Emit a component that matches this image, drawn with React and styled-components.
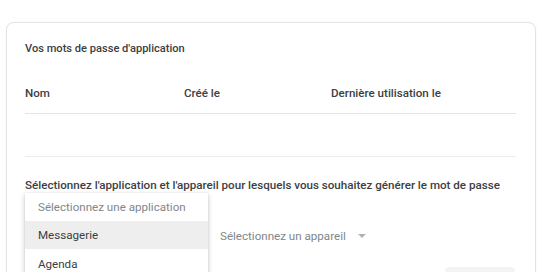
import React from "react";
import styled, { createGlobalStyle } from "styled-components";

const GlobalStyle = createGlobalStyle`
  html, body {
    margin: 0;
    padding: 0;
    background: #ffffff;
    font-family: Roboto, "Liberation Sans", Arial, sans-serif;
    overflow: hidden;
  }
`;

const Page = styled.div`
  width: 540px;
  height: 272px;
  overflow: hidden;
`;

const Intro = styled.p`
  margin: -13px 0 0 115px;
  font-size: 11px;
  line-height: 16px;
  color: #dcdee0;
  white-space: nowrap;

  a {
    color: #a8c7fa;
    text-decoration: none;
  }
`;

const Card = styled.section`
  margin: 19px 4px 0 6px;
  border: 1px solid #e3e3e3;
  border-radius: 8px;
  padding: 18px 19px 20px 18px;
  box-shadow: 0 0 2px rgba(0, 0, 0, 0.06);
`;

const Title = styled.h2`
  margin: 0;
  font-size: 11.1px;
  line-height: 16px;
  font-weight: 500;
  color: #3c4043;
`;

const Row = styled.div`
  display: grid;
  grid-template-columns: 159px 147px 1fr;
  align-items: center;
  height: ${(p) => p.$height}px;
  border-bottom: 1px solid ${(p) => p.$line};
`;

const HeadCell = styled.div`
  font-size: 11.6px;
  font-weight: 500;
  color: #3c4043;
`;

const Table = styled.div`
  margin-top: 16px;
`;

const Heading = styled.h3`
  margin: 20px 0 0;
  font-size: 11.6px;
  line-height: 16px;
  font-weight: 500;
  color: #3c4043;
  white-space: nowrap;
`;

const SelectRow = styled.div`
  position: relative;
  display: flex;
  align-items: center;
  gap: 12px;
  margin-top: 29px;
  height: 28px;
`;

const Select = styled.div`
  display: flex;
  align-items: center;
  gap: 8px;
  width: ${(p) => (p.$width ? `${p.$width}px` : "auto")};
  font-size: 11.6px;
  color: #80868b;
  white-space: nowrap;
`;

const Caret = styled.span`
  width: 0;
  height: 0;
  border-left: 4.5px solid transparent;
  border-right: 4.5px solid transparent;
  border-top: 4.5px solid #b0b3b6;
  margin-left: 4px;
`;

const Menu = styled.ul`
  position: absolute;
  left: 0;
  top: -29px;
  width: 183px;
  margin: 0;
  padding: 0;
  list-style: none;
  background: #ffffff;
  box-shadow: 0 2px 5px rgba(0, 0, 0, 0.22), 0 0 2px rgba(0, 0, 0, 0.08);
  z-index: 2;
`;

const MenuItem = styled.li`
  height: ${(p) => (p.$tall ? 30 : 28)}px;
  display: flex;
  align-items: center;
  padding-left: 13px;
  font-size: 11.6px;
  color: ${(p) => (p.$placeholder ? "#80868b" : "#3c4043")};
  background: ${(p) => (p.$active ? "#eeeeee" : "transparent")};
`;

const Footer = styled.div`
  display: flex;
  justify-content: flex-end;
  margin-top: 17px;
`;

const Button = styled.button`
  width: 70px;
  height: 30px;
  border: none;
  border-radius: 4px;
  background: #f1f3f4;
  margin-right: 1px;
`;

export default function App() {
  return (
    <Page>
      <GlobalStyle />
      <Intro>
        gérer les mots de passe pour vos applications qui ne prennent pas en{" "}
        <a href="#">charge</a>
      </Intro>
      <Card>
        <Title>Vos mots de passe d'application</Title>
        <Table>
          <Row $height={40} $line="#e4e4e4">
            <HeadCell>Nom</HeadCell>
            <HeadCell>Créé le</HeadCell>
            <HeadCell>Dernière utilisation le</HeadCell>
          </Row>
          <Row $height={42} $line="#ececec" />
        </Table>
        <Heading>
          Sélectionnez l'application et l'appareil pour lesquels vous souhaitez générer le mot de passe
        </Heading>
        <SelectRow>
          <Select $width={183} aria-hidden="true" />
          <Select>
            Sélectionnez un appareil
            <Caret />
          </Select>
          <Menu>
            <MenuItem $placeholder>Sélectionnez une application</MenuItem>
            <MenuItem $active>Messagerie</MenuItem>
            <MenuItem $tall>Agenda</MenuItem>
          </Menu>
        </SelectRow>
        <Footer>
          <Button />
        </Footer>
      </Card>
    </Page>
  );
}
